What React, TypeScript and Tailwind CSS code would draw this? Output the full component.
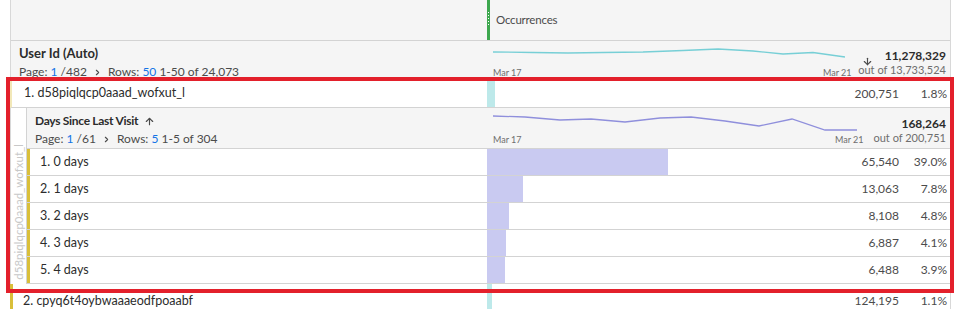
import { ArrowDown, ArrowUp, ChevronRight } from 'lucide-react';

const FULL = 463;

interface Row {
  label: string;
  value: string;
  pct: number;
}

const rows: Row[] = [
  { label: '1. 0 days', value: '65,540', pct: 39.0 },
  { label: '2. 1 days', value: '13,063', pct: 7.8 },
  { label: '3. 2 days', value: '8,108', pct: 4.8 },
  { label: '4. 3 days', value: '6,887', pct: 4.1 },
  { label: '5. 4 days', value: '6,488', pct: 3.9 },
];

function Pager({ page, pages, rows, range }: { page: number; pages: number; rows: number; range: string }) {
  return (
    <div className="flex items-center text-[12px] text-[#4b4b4b] leading-none">
      <span>Page:&nbsp;</span>
      <span className="text-[#1473e6]">{page}</span>
      <span>&nbsp;/{pages}</span>
      <ChevronRight className="w-[9px] h-[9px] mx-[6px]" strokeWidth={3} />
      <span>Rows:&nbsp;</span>
      <span className="text-[#1473e6]">{rows}</span>
      <span>&nbsp;{range}</span>
    </div>
  );
}

function Values({ value, pct }: { value: string; pct: string }) {
  return (
    <div className="ml-auto flex items-center text-[12px] text-[#4b4b4b] pr-[3px]">
      <span>{value}</span>
      <span className="w-[48px] text-right">{pct}</span>
    </div>
  );
}

export default function App() {
  return (
    <div className="relative w-[960px] h-[309px] overflow-hidden bg-white" style={{ fontFamily: "Lato, 'Open Sans', sans-serif" }}>
      <div className="ml-[10px] w-[941px] border-x border-[#d8d8d8] text-[#2c2c2c]">
        {/* column header */}
        <div className="flex h-[41px] bg-[#f5f5f5] border-b border-[#d3d3d3]">
          <div className="w-[476px]" />
          <div className="flex-1 flex items-center">
            <div className="relative w-[3px] h-full bg-[#3da74e]">
              <div className="absolute left-[1px] top-[12px] flex flex-col gap-[2px]">
                {[0, 1, 2, 3, 4].map((i) => (
                  <div key={i} className="w-[1px] h-[1px] bg-white" />
                ))}
              </div>
            </div>
            <span className="ml-[6px] text-[11.5px] tracking-[-0.2px] text-[#4b4b4b]">Occurrences</span>
          </div>
        </div>

        {/* User Id row */}
        <div className="flex h-[39px] bg-[#f5f5f5] border-b border-[#d3d3d3]">
          <div className="w-[476px] pl-[8px] pt-[6px] flex flex-col gap-[6px]">
            <span className="text-[13px] font-bold leading-none">User Id (Auto)</span>
            <Pager page={1} pages={482} rows={50} range="1-50 of 24,073" />
          </div>
          <div className="flex-1 relative">
            <svg className="absolute left-[6px] top-[6px]" width="360" height="14" viewBox="0 0 360 14">
              <polyline
                fill="none"
                stroke="#77cfd6"
                strokeWidth="1.3"
                points="0,5 40,5.5 75,6 110,5.5 150,5 190,3.5 225,2 260,4 290,7 320,5.5 352,10"
              />
            </svg>
            <span className="absolute left-[6px] top-[25px] text-[9px] text-[#6e6e6e]">Mar 17</span>
            <span className="absolute left-[336px] top-[25px] text-[9px] text-[#6e6e6e]">Mar 21</span>
            <ArrowDown className="absolute left-[375px] top-[15px] w-[11px] h-[11px] text-[#4b4b4b]" strokeWidth={2.5} />
            <div className="absolute right-[4px] top-[9px] flex flex-col items-end leading-none">
              <span className="text-[12px] font-bold text-[#2c2c2c]">11,278,329</span>
              <span className="text-[11px] text-[#6e6e6e] mt-[2px]">out of 13,733,524</span>
            </div>
          </div>
        </div>

        {/* row 1 */}
        <div className="flex h-[28px] border-b border-[#d3d3d3] border-l-2 border-l-[#f2e8b8] -ml-[1px]">
          <div className="w-[475px] flex items-center pl-[12px] text-[12.5px]">1. d58piqlqcp0aaad_wofxut_l</div>
          <div className="flex-1 flex items-stretch">
            <div className="bg-[#bde9ea]" style={{ width: Math.round(FULL * 0.018) }} />
            <Values value="200,751" pct="1.8%" />
          </div>
        </div>

        {/* breakdown */}
        <div className="flex">
          <div className="w-[16px] border-r border-[#d3d3d3] flex flex-col justify-end items-center pb-[4px]">
            <span className="[writing-mode:vertical-rl] rotate-180 text-[11.5px] text-[#c8c8c8] leading-none">d58piqlqcp0aaad_wofxut_l</span>
          </div>
          <div className="flex-1">
            <div className="flex h-[41px] bg-[#f5f5f5] border-b border-[#d3d3d3]">
              <div className="w-[460px] pl-[8px] pt-[7px] flex flex-col gap-[6px]">
                <div className="flex items-center text-[12px] font-bold leading-none tracking-[-0.3px]">
                  Days Since Last Visit
                  <ArrowUp className="ml-[6px] w-[11px] h-[11px] text-[#4b4b4b]" strokeWidth={2.5} />
                </div>
                <Pager page={1} pages={61} rows={5} range="1-5 of 304" />
              </div>
              <div className="flex-1 relative">
                <svg className="absolute left-[6px] top-[5px]" width="366" height="18" viewBox="0 0 366 18">
                  <polyline
                    fill="none"
                    stroke="#8f8fdc"
                    strokeWidth="1.3"
                    points="0,3 32,4 67,7 98,6 132,9 167,5 198,4 232,8 266,13 299,6 332,17 364,17"
                  />
                </svg>
                <span className="absolute left-[6px] top-[25px] text-[9px] text-[#6e6e6e]">Mar 17</span>
                <span className="absolute left-[348px] top-[25px] text-[9px] text-[#6e6e6e]">Mar 21</span>
                <div className="absolute right-[4px] top-[10px] flex flex-col items-end leading-none">
                  <span className="text-[12px] font-bold text-[#2c2c2c]">168,264</span>
                  <span className="text-[11px] text-[#6e6e6e] mt-[2px]">out of 200,751</span>
                </div>
              </div>
            </div>
            {rows.map((r) => (
              <div key={r.label} className="flex h-[27px] border-b border-[#d3d3d3]">
                <div className="w-[460px] flex items-center border-l-[3px] border-[#d9bf3a] pl-[10px] text-[12.5px]">{r.label}</div>
                <div className="flex-1 flex items-stretch">
                  <div className="bg-[#c9caf1]" style={{ width: Math.round((FULL * r.pct) / 100) }} />
                  <Values value={r.value} pct={`${r.pct.toFixed(1)}%`} />
                </div>
              </div>
            ))}
          </div>
        </div>

        {/* row 2 */}
        <div className="flex h-[28px] border-l-[3px] border-l-[#d9bf3a] -ml-[1px]">
          <div className="w-[474px] flex items-start pt-[8px] pl-[10px] text-[12.5px]">2. cpyq6t4oybwaaaeodfpoaabf</div>
          <div className="flex-1 flex items-stretch">
            <div className="bg-[#bde9ea]" style={{ width: Math.round(FULL * 0.011) }} />
            <div className="ml-auto flex items-start pt-[8px] text-[12px] text-[#4b4b4b] pr-[3px]">
              <span>124,195</span>
              <span className="w-[48px] text-right">1.1%</span>
            </div>
          </div>
        </div>
      </div>

      {/* highlight frame */}
      <div className="absolute left-[6px] top-[77px] w-[948px] h-[216px] border-[4px] border-[#e3202b] pointer-events-none" />
    </div>
  );
}
